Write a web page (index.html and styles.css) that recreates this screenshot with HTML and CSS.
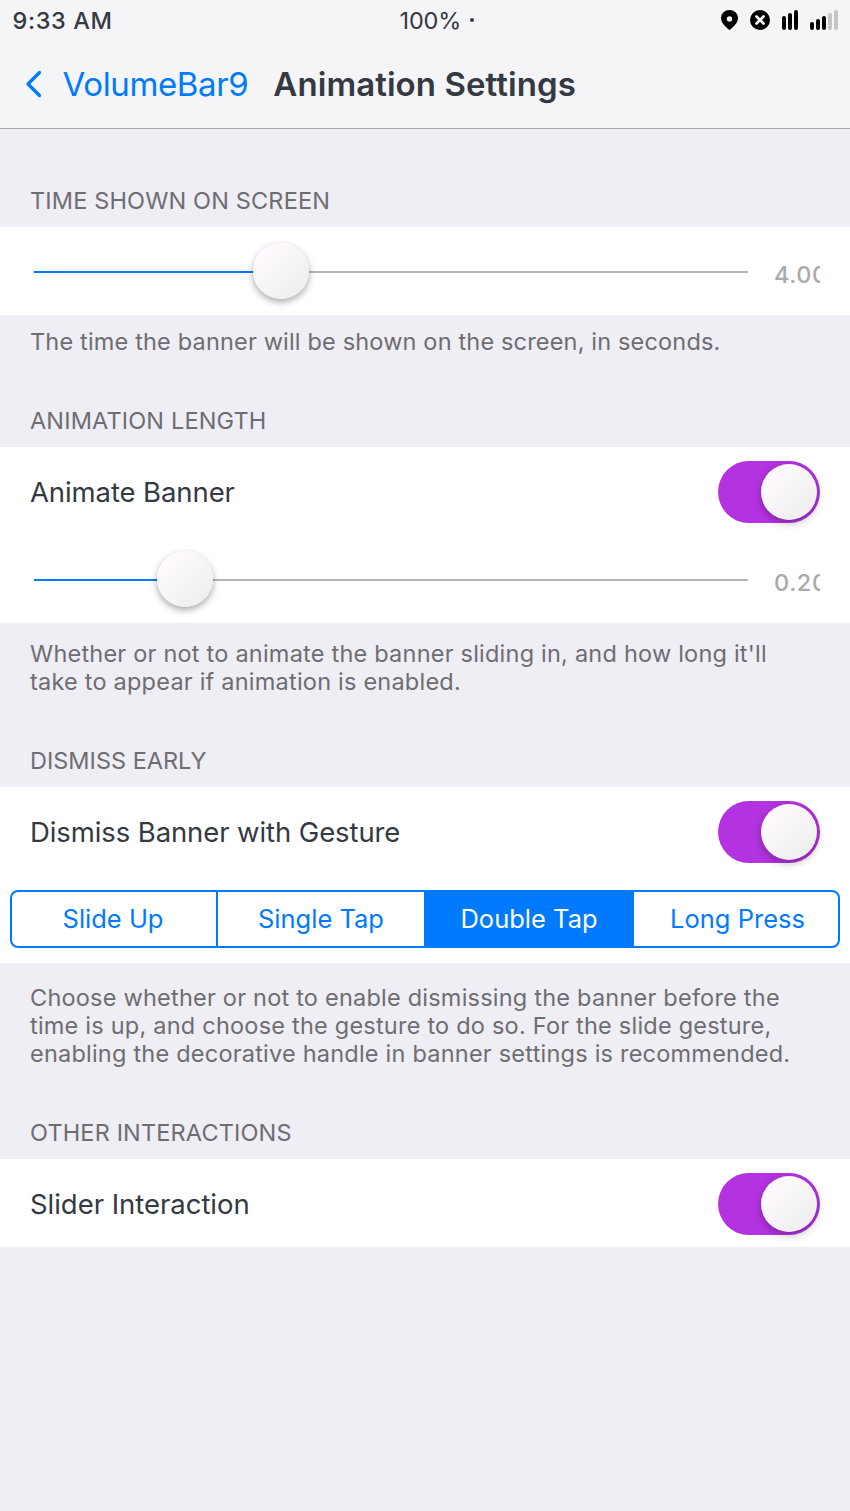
FILE: index.html
```html
<!DOCTYPE html>
<html lang="en">
<head>
<meta charset="utf-8">
<title>Animation Settings</title>
<link rel="stylesheet" href="styles.css">
</head>
<body>
<header class="top">
  <div class="status">
    <span class="time">9:33 AM</span>
    <span class="battery">100% <i class="dot"></i></span>
    <svg class="status-icons" width="120" height="24" viewBox="0 0 120 24">
      <path fill-rule="evenodd" d="M9.5 22C7 20 1 15.500 1 10a8.500 8 0 0 1 17 0c0 5.500-6 10-8.500 12zM9.500 8.200a2.700 2.700 0 1 0 0 5.400 2.700 2.700 0 0 0 0-5.400z"/>
      <circle cx="40" cy="12" r="10"/>
      <path d="M36.500 8.500l7 7m0-7l-7 7" stroke="#f5f5f7" stroke-width="2.700" stroke-linecap="round"/>
      <rect x="62" y="8" width="4" height="14" rx="2"/>
      <rect x="68" y="5" width="4" height="17" rx="2"/>
      <rect x="74" y="2" width="4" height="20" rx="2"/>
      <rect x="90" y="14" width="4" height="8" rx="2"/>
      <rect x="96" y="11" width="4" height="11" rx="2"/>
      <rect x="102" y="8" width="4" height="14" rx="2"/>
      <rect x="108" y="5" width="4" height="17" rx="2" fill="#c5c5c6"/>
      <rect x="114" y="2" width="4" height="20" rx="2" fill="#c5c5c6"/>
    </svg>
  </div>
  <nav class="nav">
    <svg class="chevron" width="18" height="30" viewBox="0 0 18 30"><path d="M15.500 3.500L4 15l11.500 11.500" fill="none" stroke="#007aff" stroke-width="3.200" stroke-linecap="round" stroke-linejoin="round"/></svg>
    <a class="back">VolumeBar9</a>
    <h1 class="title">Animation Settings</h1>
  </nav>
</header>
<main>
  <section>
    <h2 class="label first">TIME SHOWN ON SCREEN</h2>
    <div class="list">
      <div class="row slider-row">
        <div class="track"><div class="fill" style="width:247px"></div><div class="rest"></div><div class="knob" style="left:219px"></div></div>
        <span class="value">4.00</span>
      </div>
    </div>
    <p class="note one">The time the banner will be shown on the screen, in seconds.</p>
  </section>
  <section>
    <h2 class="label">ANIMATION LENGTH</h2>
    <div class="list">
      <div class="row"><span class="name">Animate Banner</span><div class="switch"><div class="thumb"></div></div></div>
      <div class="row slider-row">
        <div class="track"><div class="fill" style="width:151px"></div><div class="rest"></div><div class="knob" style="left:123px"></div></div>
        <span class="value">0.20</span>
      </div>
    </div>
    <p class="note two">Whether or not to animate the banner sliding in, and how long it'll<br>take to appear if animation is enabled.</p>
  </section>
  <section>
    <h2 class="label tight">DISMISS EARLY</h2>
    <div class="list">
      <div class="row"><span class="name">Dismiss Banner with Gesture</span><div class="switch"><div class="thumb"></div></div></div>
      <div class="row seg-row">
        <div class="segments">
          <div class="seg first-seg">Slide Up</div>
          <div class="seg">Single Tap</div>
          <div class="seg active">Double Tap</div>
          <div class="seg last-seg">Long Press</div>
        </div>
      </div>
    </div>
    <p class="note three">Choose whether or not to enable dismissing the banner before the<br>time is up, and choose the gesture to do so. For the slide gesture,<br>enabling the decorative handle in banner settings is recommended.</p>
  </section>
  <section>
    <h2 class="label">OTHER INTERACTIONS</h2>
    <div class="list">
      <div class="row"><span class="name loose">Slider Interaction</span><div class="switch"><div class="thumb"></div></div></div>
    </div>
  </section>
</main>
</body>
</html>
```
FILE: styles.css
```css
* { box-sizing: border-box; }
body {
  margin: 0;
  min-height: 1511px;
  background: #efeef4;
  color: #343942;
  font-family: Inter, "Liberation Sans", sans-serif;
}
.top { height: 129px; background: #f5f5f7; border-bottom: 1px solid #a5a5ab; }
.status {
  display: grid;
  grid-template-columns: 387px 1fr 120px;
  align-items: center;
  height: 40px;
  padding: 0 10px 0 12.500px;
  font-size: 23.500px;
}
.time { font-weight: 500; letter-spacing: 0.6px; }
.battery { display: flex; align-items: center; gap: 9px; letter-spacing: -0.15px; }
.dot { width: 4px; height: 4px; border-radius: 50%; background: #343942; }
.nav { display: flex; align-items: center; height: 88px; padding-left: 24px; }
.chevron { margin-right: 20.500px; }
.back { color: #007aff; font-size: 33px; margin-right: 25px; letter-spacing: -0.37px; }
.title { margin: 0; font-size: 33px; font-weight: 600; letter-spacing: 0.07px; }
.label {
  display: flex;
  align-items: flex-end;
  height: 64px;
  margin: 0;
  padding: 0 30px 12px;
  font-size: 23.500px;
  line-height: 28px;
  font-weight: 400;
  color: #6d6d72;
  letter-spacing: 0.15px;
  white-space: nowrap;
}
.label.first { height: 98px; }
.label.tight { letter-spacing: 0; }
.list { background: #fff; }
.row { display: flex; align-items: center; justify-content: space-between; height: 88px; padding: 2px 30px 0; }
.name { font-size: 27.500px; letter-spacing: -0.1px; }
.name.loose { letter-spacing: -0.03px; }
.switch { width: 102px; height: 62px; border-radius: 31px; background: #b333e0; padding: 3px; display: flex; justify-content: flex-end; }
.thumb, .knob { width: 56px; height: 56px; border-radius: 50%; background: linear-gradient(135deg, #fffaff 15%, #eeeeee 90%); }
.thumb { box-shadow: 0 3px 8px rgba(0, 0, 0, 0.3); }
.slider-row { padding: 2px 30px 0 34px; }
.track { position: relative; display: flex; width: 714px; height: 2px; }
.fill { background: #007aff; }
.rest { flex: 1; background: #b6b6b6; }
.knob { position: absolute; top: -28px; box-shadow: 0 3px 7px rgba(0, 0, 0, 0.35); }
.value { width: 46px; overflow: hidden; padding-top: 5px; color: #aaa; font-size: 23.500px; font-weight: 500; letter-spacing: 0.6px; }
.note { margin: 0; padding: 0 30px; font-size: 23.500px; line-height: 28px; color: #6d6d72; letter-spacing: 0.22px; white-space: nowrap; }
.one { height: 68px; padding-top: 13px; letter-spacing: 0.17px; }
.two { height: 100px; padding-top: 17px; }
.three { height: 132px; padding-top: 21px; }
.seg-row { padding: 0 10px; }
.segments { display: grid; grid-template-columns: 206px 206px 210px 1fr; width: 830px; height: 58px; border: 2px solid #007aff; border-radius: 8px; overflow: hidden; }
.seg { display: flex; align-items: center; justify-content: center; padding: 0 0 2px; color: #007aff; font-size: 25.500px; }
.first-seg { border-right: 2px solid #007aff; padding-right: 2px; }
.last-seg { padding-left: 3px; }
.active { background: #007aff; color: #fff; }
```
